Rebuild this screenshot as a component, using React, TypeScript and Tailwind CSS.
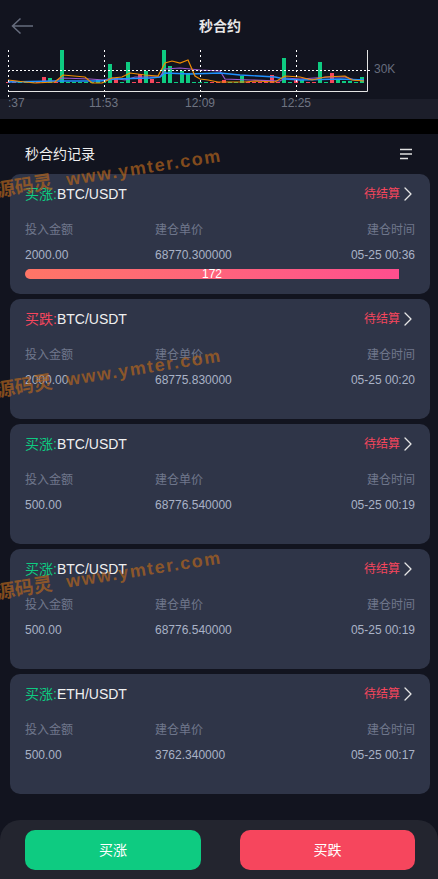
import React from 'react';
import { ChevronRight } from 'lucide-react';

const records = [
  { side: '买涨', up: true, pair: 'BTC/USDT', amount: '2000.00', price: '68770.300000', time: '05-25 00:36', left: 172 },
  { side: '买跌', up: false, pair: 'BTC/USDT', amount: '2000.00', price: '68775.830000', time: '05-25 00:20' },
  { side: '买涨', up: true, pair: 'BTC/USDT', amount: '500.00', price: '68776.540000', time: '05-25 00:19' },
  { side: '买涨', up: true, pair: 'BTC/USDT', amount: '500.00', price: '68776.540000', time: '05-25 00:19' },
  { side: '买涨', up: true, pair: 'ETH/USDT', amount: '500.00', price: '3762.340000', time: '05-25 00:17' },
];

const GREEN = '#0ecb81';
const RED = '#f6465d';

// x, top of bar, colour; the base of every bar is y=83
const bars: [number, number, string][] = [
  [6, 82, RED], [12, 82, RED], [18, 82, GREEN], [24, 82, GREEN], [30, 82, GREEN], [36, 82, RED],
  [42, 77, RED], [48, 78, GREEN], [54, 82, RED], [60, 50, GREEN], [66, 82, GREEN], [72, 82, GREEN],
  [78, 82, GREEN], [84, 82, GREEN], [90, 82, GREEN], [96, 80, GREEN], [102, 82, GREEN], [108, 64, GREEN],
  [114, 78, RED], [120, 82, GREEN], [126, 62, GREEN], [132, 82, RED], [138, 74, RED], [144, 71, GREEN],
  [150, 79, RED], [156, 82, RED], [162, 50, GREEN], [168, 66, GREEN], [174, 82, GREEN], [180, 71, GREEN],
  [186, 73, GREEN], [192, 82, GREEN], [198, 82, GREEN], [204, 82, GREEN], [210, 82, RED], [216, 82, RED],
  [222, 80, RED], [228, 82, GREEN], [234, 82, GREEN], [240, 76, GREEN], [246, 82, RED], [252, 82, RED],
  [258, 82, RED], [264, 82, RED], [270, 75, RED], [276, 82, RED], [282, 58, GREEN], [288, 82, GREEN],
  [294, 80, RED], [300, 80, GREEN], [306, 82, RED], [312, 82, RED], [318, 62, GREEN], [324, 82, GREEN],
  [330, 73, RED], [336, 80, GREEN], [342, 81, GREEN], [348, 81, GREEN], [354, 82, GREEN], [360, 77, GREEN],
];

function Chart() {
  return (
    <svg width="438" height="99" className="block absolute left-0 top-0">
      {bars.map(([x, top, color], i) => (
        <rect key={i} x={x} y={top} width="4" height={83 - top} fill={color} />
      ))}
      <polyline
        fill="none"
        stroke="#9b59d0"
        strokeWidth="1.2"
        points="8,81 30,82 55,81 62,78 90,79 104,80 112,78 125,80 135,77 160,77 165,69 180,68 200,70 220,71 225,79 250,80 280,81 285,78 300,79 315,78 330,77 345,77 355,80 364,80"
      />
      <polyline
        fill="none"
        stroke="#1e90ff"
        strokeWidth="1.4"
        points="8,82 55,81 100,81 115,79 150,78 160,77 165,73 190,74 220,73 240,75 275,77 285,79 300,80 340,79 364,80"
      />
      <polyline
        fill="none"
        stroke="#f08c00"
        strokeWidth="1.2"
        points="8,80 25,82 35,83 55,82 63,75 85,77 92,83 102,83 112,78 122,77 130,73 145,75 158,76 165,63 172,61 180,63 188,60 195,76 200,79 208,80 218,82 245,82 255,81 275,82 285,76 300,77 312,80 325,77 345,76 352,80 364,81"
      />
      <line x1="8" y1="70.5" x2="371" y2="70.5" stroke="#fff" strokeDasharray="2 2" />
      {[8.5, 104.5, 200.5, 296.5].map((x) => (
        <line key={x} x1={x} y1="50" x2={x} y2="97" stroke="#fff" strokeDasharray="2 3" />
      ))}
      <path d="M8 91.5H367.5V50" fill="none" stroke="#e4e4e4" />
    </svg>
  );
}

function Watermark({ className }: { className: string }) {
  return (
    <div
      className={`absolute left-[-4px] z-10 whitespace-nowrap -rotate-[9deg] origin-left text-[#b5651d]/70 font-bold leading-none font-['Liberation_Sans','Noto_Sans_CJK_SC',sans-serif] ${className}`}
    >
      <span className="text-[19px]">源码灵</span>
      <span className="ml-[14px] text-[18px] tracking-[1.6px]">www.ymter.com</span>
    </div>
  );
}

export default function App() {
  return (
    <div className="relative w-[438px] h-[879px] overflow-hidden bg-black text-white font-['Liberation_Sans','Noto_Sans_CJK_SC',sans-serif]">
      {/* Top: title and chart */}
      <div className="relative h-[119px] bg-[#12141f]">
        <div className="relative z-10 flex items-center h-[52px] pl-[11px]">
          <svg width="23" height="18" viewBox="0 0 23 18" fill="none" stroke="#666c7d" strokeWidth="1.5">
            <path d="M22 9H1.5M9.5 1.5 1.5 9l8 7.5" />
          </svg>
          <span className="absolute left-[2px] right-0 text-center text-sm font-bold text-[#e6e6e6]">秒合约</span>
        </div>
        <Chart />
        <span className="absolute left-[374px] top-[60px] text-xs leading-[18px] text-[#666c7d]">30K</span>
        <div className="absolute left-0 right-0 top-[99px] h-5 bg-[#1c1e2a] text-xs leading-5 text-[#6f7482]">
          <span className="absolute left-[8px] -top-[6px]">:37</span>
          <span className="absolute left-[89px] -top-[6px]">11:53</span>
          <span className="absolute left-[185px] -top-[6px]">12:09</span>
          <span className="absolute left-[281px] -top-[6px]">12:25</span>
        </div>
      </div>

      {/* Records */}
      <div className="mt-[15px] h-[745px] bg-[#12141f] flex flex-col">
        <div className="flex items-center justify-between h-10 pl-[25px] pr-[26px]">
          <span className="text-sm text-[#f0f0f0]">秒合约记录</span>
          <svg width="12" height="12" viewBox="0 0 12 12" fill="none" stroke="#e0e0e0" strokeWidth="1.4">
            <path d="M0 1.5h12M0 6h12M0 10.5h8" />
          </svg>
        </div>
        <div className="flex flex-col gap-[5px] pl-[10px] pr-[8px]">
          {records.map((r, i) => (
            <div key={i} className="h-[120px] rounded-[10px] bg-[#2f3548] px-[15px] pt-3">
              <div className="flex items-center justify-between h-4 text-sm">
                <span>
                  <span className={r.up ? 'text-[#0ecb81]' : 'text-[#f6465d]'}>{r.side}:</span>
                  <span className="text-[#f0f0f0]">{r.pair}</span>
                </span>
                <span className="flex items-center text-xs text-[#f6465d]">
                  待结算
                  <ChevronRight size={24} strokeWidth={1.3} className="text-[#e6e6e6] -ml-[4px] -mr-[5px]" />
                </span>
              </div>
              <div className="grid grid-cols-[130px_1fr_auto] mt-5 text-xs leading-4 text-[#6f778c]">
                <span>投入金额</span>
                <span>建仓单价</span>
                <span>建仓时间</span>
              </div>
              <div className="grid grid-cols-[130px_1fr_auto] mt-[9px] text-xs leading-4 text-[#a9b2c6]">
                <span>{r.amount}</span>
                <span>{r.price}</span>
                <span>{r.time}</span>
              </div>
              {r.left !== undefined && (
                <div className="mt-[6px] h-[10px] w-[374px] rounded-l-[5px] bg-gradient-to-r from-[#ff7566] to-[#ff4e8e] text-center text-xs leading-[10px] text-white">
                  {r.left}
                </div>
              )}
            </div>
          ))}
        </div>
      </div>

      {/* Bottom actions */}
      <div className="absolute left-0 right-0 bottom-0 h-[59px] rounded-t-[20px] bg-[#23252f] flex justify-between pl-[25px] pr-[23px] pt-[10px]">
        <button className="w-[176px] h-10 rounded-[10px] bg-[#0ecb81] text-sm text-white">买涨</button>
        <button className="w-[175px] h-10 rounded-[10px] bg-[#f6465d] text-sm text-white">买跌</button>
      </div>

      <Watermark className="top-[181px]" />
      <Watermark className="top-[381px]" />
      <Watermark className="top-[583px]" />
    </div>
  );
}
